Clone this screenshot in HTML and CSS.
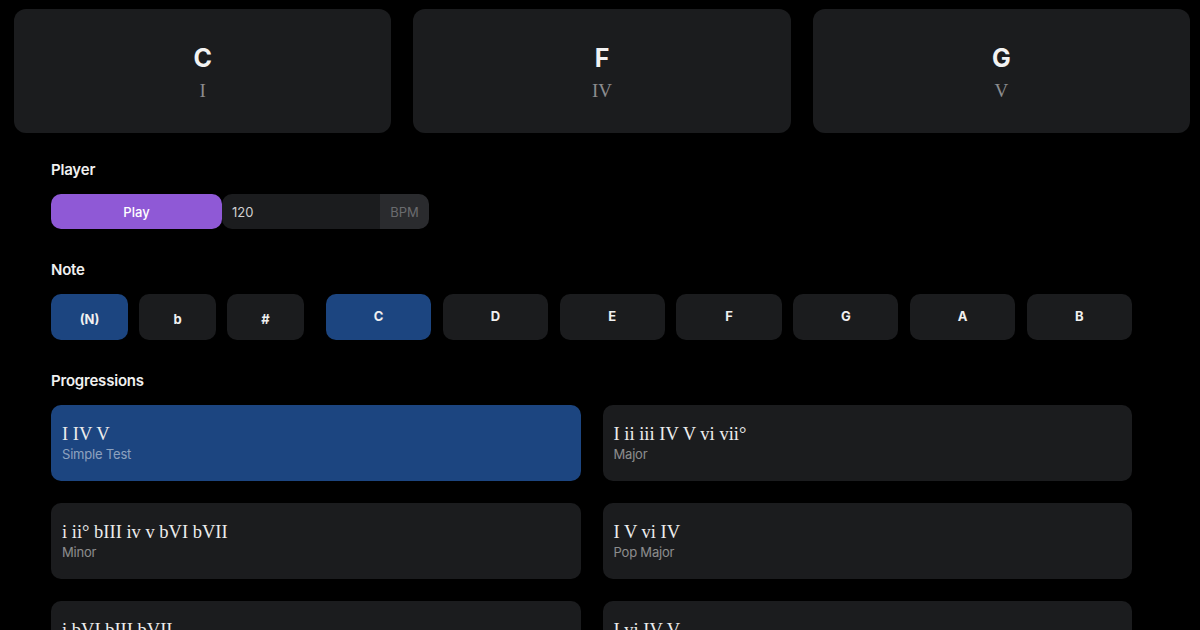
FILE: index.html
```html
<!DOCTYPE html>
<html lang="en">
<head>
<meta charset="utf-8">
<title>Chords</title>
<link rel="stylesheet" href="styles.css">
</head>
<body>
<div class="page">
  <div class="chords">
    <div class="chord"><div class="chord-name">C</div><div class="chord-roman">I</div></div>
    <div class="chord"><div class="chord-name">F</div><div class="chord-roman">IV</div></div>
    <div class="chord"><div class="chord-name">G</div><div class="chord-roman">V</div></div>
  </div>

  <div class="controls">
    <section class="section">
      <h2 class="label">Player</h2>
      <div class="player">
        <button class="play">Play</button>
        <div class="bpm-input"><span class="bpm-value">120</span></div>
        <div class="bpm-addon">BPM</div>
      </div>
    </section>

    <section class="section">
      <h2 class="label">Note</h2>
      <div class="notes">
        <div class="accidentals">
          <button class="btn acc active">(N)</button>
          <button class="btn acc">b</button>
          <button class="btn acc">#</button>
        </div>
        <div class="naturals">
          <button class="btn note active">C</button>
          <button class="btn note">D</button>
          <button class="btn note">E</button>
          <button class="btn note">F</button>
          <button class="btn note">G</button>
          <button class="btn note">A</button>
          <button class="btn note">B</button>
        </div>
      </div>
    </section>

    <section class="section">
      <h2 class="label">Progressions</h2>
      <div class="progressions">
        <div class="prog active"><div class="prog-roman">I IV V</div><div class="prog-name">Simple Test</div></div>
        <div class="prog"><div class="prog-roman">I ii iii IV V vi vii°</div><div class="prog-name">Major</div></div>
        <div class="prog"><div class="prog-roman">i ii° bIII iv v bVI bVII</div><div class="prog-name">Minor</div></div>
        <div class="prog"><div class="prog-roman">I V vi IV</div><div class="prog-name">Pop Major</div></div>
        <div class="prog"><div class="prog-roman">i bVI bIII bVII</div><div class="prog-name">Pop Minor</div></div>
        <div class="prog"><div class="prog-roman">I vi IV V</div><div class="prog-name">50s</div></div>
      </div>
    </section>
  </div>
</div>
</body>
</html>
```

FILE: styles.css
```css
* { box-sizing: border-box; }
html, body {
  margin: 0;
  padding: 0;
  background: #000;
  color: #fff;
  font-family: Inter, "Noto Sans", sans-serif;
  overflow: hidden;
}
.page {
  padding: 9px 10px 0 14px;
}
.chords {
  display: grid;
  grid-template-columns: repeat(3, 1fr);
  gap: 22px;
}
.chord {
  height: 124px;
  background: #1b1c1e;
  border-radius: 12px;
  display: flex;
  flex-direction: column;
  align-items: center;
  padding-top: 34px;
}
.chord-name {
  font-size: 25px;
  font-weight: 700;
  line-height: 30px;
  color: #f2f2f2;
}
.chord-roman {
  font-family: "Liberation Serif", serif;
  font-size: 19px;
  line-height: 24px;
  margin-top: 6px;
  color: #8c8c8e;
}
.controls {
  margin-left: 37px;
  width: 1081px;
  padding-top: 27px;
}
.section { margin-bottom: 31px; }
.label {
  margin: 0 0 14px;
  font-size: 15px;
  line-height: 20px;
  font-weight: 600;
  color: #f0f0f0;
  letter-spacing: -0.2px;
}
.player {
  display: flex;
  height: 35px;
  width: 378px;
}
.play {
  width: 171px;
  border: 0;
  background: #8f59d6;
  color: #fff;
  font-family: inherit;
  font-size: 13px;
  font-weight: 500;
  border-radius: 10px;
}
.bpm-input {
  flex: 1;
  background: #1b1c1e;
  border-radius: 10px 0 0 10px;
  display: flex;
  align-items: center;
  padding-left: 10px;
  font-size: 13px;
  color: #d0d0d0;
}
.bpm-addon {
  width: 49px;
  background: #2a2b2e;
  border-radius: 0 10px 10px 0;
  display: flex;
  align-items: center;
  justify-content: center;
  font-size: 13px;
  color: #6a6b6e;
}
.notes {
  display: flex;
  gap: 22px;
  height: 46px;
}
.accidentals, .naturals {
  display: flex;
  gap: 11px;
}
.naturals { flex: 1; gap: 11.6px; }
.btn {
  border: 0;
  border-radius: 10px;
  background: #1b1c1e;
  color: #f0f0f0;
  font-family: inherit;
  font-size: 13px;
  font-weight: 700;
  height: 46px;
  padding: 0;
}
.acc { width: 77px; padding-top: 4px; }
.note { flex: 1; padding-bottom: 2px; }
.btn.active { background: #1c4580; }
.progressions {
  display: grid;
  grid-template-columns: 1fr 1fr;
  gap: 22px;
}
.prog {
  height: 76px;
  background: #1b1c1e;
  border-radius: 10px;
  padding: 18px 11px 0;
}
.prog.active { background: #1c4580; }
.prog-roman {
  font-family: "Liberation Serif", serif;
  font-size: 18.5px;
  line-height: 22px;
  color: #ececec;
}
.prog-name {
  font-size: 13px;
  line-height: 18px;
  color: rgba(255,255,255,0.5);
  letter-spacing: -0.2px;
}
```
